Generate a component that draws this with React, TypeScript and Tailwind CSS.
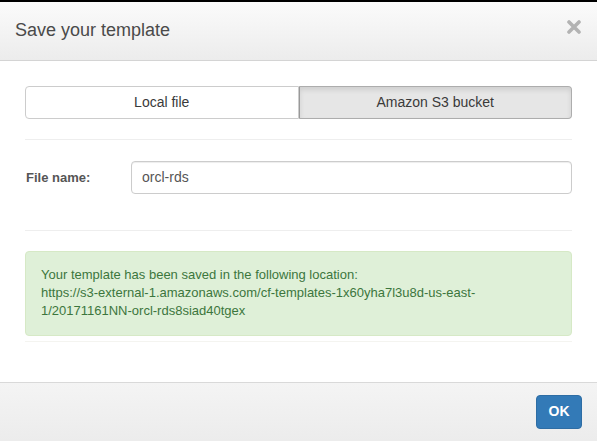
const App = () => {
  return (
    <div className="w-[597px] h-[441px] bg-white border-t-2 border-black flex flex-col font-['Liberation_Sans',Arial,sans-serif] overflow-hidden">
      <div className="h-[59px] shrink-0 flex items-center justify-between pl-[15px] pr-[16px] bg-gradient-to-b from-[#fbfbfb] to-[#ececec] border-b border-[#d4d4d4]">
        <h4 className="text-[18px] text-[#4a4a4a] leading-none -mt-[3px]">Save your template</h4>
        <button className="-mt-[8px]">
          <svg width="14" height="14" viewBox="0 0 14 14">
            <path d="M2 2 L12 12 M12 2 L2 12" stroke="#b3b3b3" strokeWidth="3.6" strokeLinecap="round" />
          </svg>
        </button>
      </div>
      <div className="flex-1 px-[25px] pt-[25px]">
        <div className="flex h-[33px] text-[14px] text-[#3a3a3a]">
          <button className="flex-1 bg-white border border-[#ccc] rounded-l-[4px] flex items-center justify-center">Local file</button>
          <button className="flex-1 bg-[#e6e6e6] border border-[#adadad] border-l-[#999] rounded-r-[4px] shadow-[inset_0_3px_5px_rgba(0,0,0,0.1)] flex items-center justify-center">Amazon S3 bucket</button>
        </div>
        <div className="border-t border-[#eee] mt-[20px]" />
        <div className="flex items-center mt-[21px]">
          <label className="w-[106px] pl-[1px] text-[13px] font-bold text-[#555]">File name:</label>
          <div className="flex-1 h-[33px] border border-[#ccc] rounded-[4px] shadow-[inset_0_1px_1px_rgba(0,0,0,0.075)] flex items-center px-[10px] text-[14px] text-[#555]">orcl-rds</div>
        </div>
        <div className="border-t border-[#eee] mt-[36px]" />
        <div className="mt-[20px] h-[85px] bg-[#dff0d8] border border-[#d6e9c6] rounded-[4px] px-[15px] pt-[14px] text-[13px] leading-[18px] text-[#3c763d]">
          <div>Your template has been saved in the following location:</div>
          <div>https://s3-external-1.amazonaws.com/cf-templates-1x60yha7l3u8d-us-east-</div>
          <div>1/20171161NN-orcl-rds8siad40tgex</div>
        </div>
        <div className="border-t border-[#f4f4f0] mt-[5px]" />
      </div>
      <div className="h-[59px] shrink-0 border-t border-[#d9d9d9] bg-gradient-to-b from-[#f4f4f4] to-[#ececec] flex items-center justify-end pr-[15px]">
        <button className="w-[46px] h-[34px] -mt-[1px] bg-[#337ab7] border border-[#2e6da4] rounded-[4px] text-white text-[14px] font-bold">OK</button>
      </div>
    </div>
  );
};

export default App;
